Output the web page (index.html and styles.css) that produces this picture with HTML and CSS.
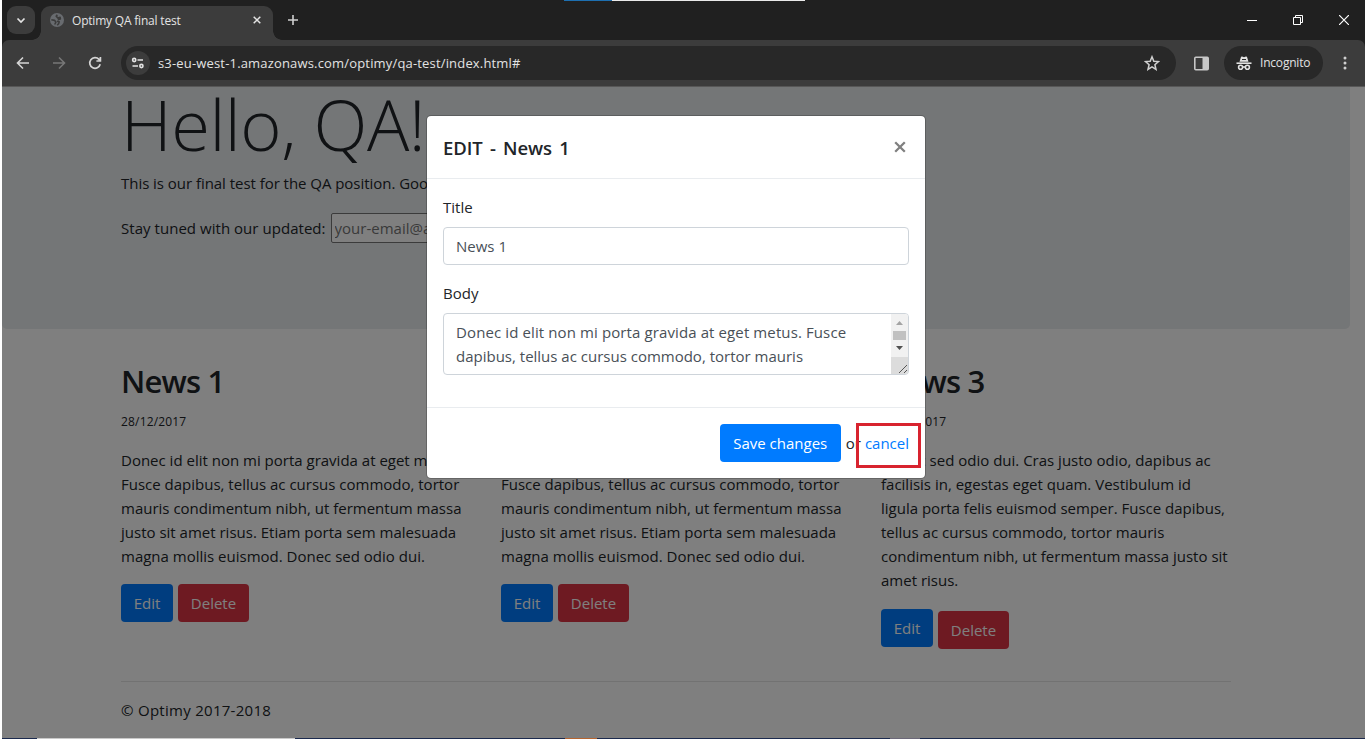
FILE: index.html
```html
<!DOCTYPE html>
<html lang="en">
<head>
<meta charset="utf-8">
<title>Optimy QA final test</title>
<link rel="stylesheet" href="styles.css">
</head>
<body>
<div class="window">
  <header class="tabstrip">
    <span class="topline"></span>
    <button class="tab-search"><svg width="10" height="7" viewBox="0 0 10 7"><path d="M1.500 1.500 5 5l3.500-3.500" fill="none" stroke="#e3e3e3" stroke-width="1.700"/></svg></button>
    <div class="tab">
      <svg class="globe" width="14" height="14" viewBox="0 0 14 14"><circle cx="7" cy="7" r="7" fill="#686b6f"/><path d="M7.300 1.800 6.200 3.300l1.600 1.600 2.300-.6.300 1.700-2.600.6M1.300 6.700l3.400.7 1.200 1.800-1.200 2.300M7 8.300l2.200.4-.6 2-1.400 1.500" fill="none" stroke="#3c3c3c" stroke-width="1.600" stroke-linejoin="round"/></svg>
      <span class="tab-title">Optimy QA final test</span>
      <svg class="tab-close" width="8" height="8" viewBox="0 0 8 8"><path d="m.7.700 6.600 6.600m0-6.600L.7 7.300" stroke="#e3e3e3" stroke-width="1.500"/></svg>
    </div>
    <svg class="new-tab" width="10" height="10" viewBox="0 0 10 10"><path d="M5 0v10M0 5h10" stroke="#d0d0d0" stroke-width="1.600"/></svg>
    <div class="win-controls">
      <svg width="10" height="10" viewBox="0 0 10 10"><path d="M0 5.500h10" stroke="#fff"/></svg>
      <svg width="10" height="10" viewBox="0 0 10 10"><path d="M.5 2.500h7v7h-7zM2.500 2.500v-2h7v7h-2" fill="none" stroke="#fff"/></svg>
      <svg width="10" height="10" viewBox="0 0 10 10"><path d="m0 0 10 10M10 0 0 10" stroke="#fff" stroke-width="1.200"/></svg>
    </div>
  </header>
  <div class="toolbar">
    <svg class="nav-icon" width="14" height="14" viewBox="0 0 14 14"><path d="M13 7H1.500M7 1.500 1.500 7 7 12.500" fill="none" stroke="#d5d5d5" stroke-width="1.600"/></svg>
    <svg class="nav-icon" width="14" height="14" viewBox="0 0 14 14"><path d="M1 7h11.500M7 1.500 12.500 7 7 12.500" fill="none" stroke="#777" stroke-width="1.600"/></svg>
    <svg class="nav-icon" width="14" height="14" viewBox="0 0 14 14"><path d="M12.200 8.300A5.300 5.300 0 1 1 11 3.400L12.200 4.600M12.400 1V5H8.400" fill="none" stroke="#d5d5d5" stroke-width="1.700"/></svg>
    <div class="address">
      <span class="site-info"><svg width="14" height="12" viewBox="0 0 14 12"><g fill="none" stroke="#e3e3e3" stroke-width="1.600"><circle cx="3.200" cy="3" r="1.600"/><path d="M6.500 3H12M1.500 9H7"/><circle cx="10.400" cy="9" r="1.600"/></g></svg></span>
      <span class="url">s3-eu-west-1.amazonaws.com/optimy/qa-test/index.html#</span>
      <svg class="star" width="16" height="16" viewBox="0 0 16 16"><path d="m8 1.800 1.800 4.400 4.700.4-3.600 3.100 1.100 4.600L8 11.800l-4 2.500 1.100-4.600-3.600-3.100 4.700-.4z" fill="none" stroke="#d0d0d0" stroke-width="1.500"/></svg>
    </div>
    <svg class="panel" width="15" height="15" viewBox="0 0 15 15"><rect x=".8" y="1.300" width="13.400" height="12.400" rx="1" fill="none" stroke="#c7c7c7" stroke-width="1.600"/><path d="M8.500 1h5.500v13H8.500z" fill="#c7c7c7"/></svg>
    <div class="incognito">
      <svg width="16" height="15" viewBox="0 0 16 15"><path d="m3.500 5.700 1.400-4.500C5 .6 5.600.4 6.100.6L8 1.200 9.900.6c.5-.2 1.100 0 1.200.6l1.400 4.500z" fill="#e3e3e3"/><path d="M6 3.500h4" stroke="#282828"/><path d="M.5 7.200h15" stroke="#e3e3e3" stroke-width="1.600"/><g fill="none" stroke="#e3e3e3" stroke-width="1.600"><circle cx="4.600" cy="11.300" r="2"/><circle cx="11.400" cy="11.300" r="2"/><path d="M6.500 11h3"/></g></svg>
      <span>Incognito</span>
    </div>
    <svg class="menu" width="4" height="14" viewBox="0 0 4 14"><g fill="#d0d0d0"><circle cx="2" cy="2" r="1.500"/><circle cx="2" cy="7" r="1.500"/><circle cx="2" cy="12" r="1.500"/></g></svg>
  </div>

  <main class="viewport">
    <section class="jumbotron">
      <h1>Hello, QA!</h1>
      <p class="lead">This is our final test for the QA position. Good luck!</p>
      <div class="subscribe"><span class="sub-label">Stay tuned with our updated:</span><input class="email" placeholder="your-email@address.com"></div>
    </section>
    <section class="news">
      <article>
        <h2>News 1</h2>
        <small>28/12/2017</small>
        <p>Donec id elit non mi porta gravida at eget metus.<br>Fusce dapibus, tellus ac cursus commodo, tortor<br>mauris condimentum nibh, ut fermentum massa<br>justo sit amet risus. Etiam porta sem malesuada<br>magna mollis euismod. Donec sed odio dui.</p>
        <div class="actions"><button class="btn edit">Edit</button><button class="btn delete">Delete</button></div>
      </article>
      <article>
        <h2>News 2</h2>
        <small>28/12/2017</small>
        <p>Donec id elit non mi porta gravida at eget metus.<br>Fusce dapibus, tellus ac cursus commodo, tortor<br>mauris condimentum nibh, ut fermentum massa<br>justo sit amet risus. Etiam porta sem malesuada<br>magna mollis euismod. Donec sed odio dui.</p>
        <div class="actions"><button class="btn edit">Edit</button><button class="btn delete">Delete</button></div>
      </article>
      <article>
        <h2>News 3</h2>
        <small>28/12/2017</small>
        <p>Donec sed odio dui. Cras justo odio, dapibus ac<br>facilisis in, egestas eget quam. Vestibulum id<br>ligula porta felis euismod semper. Fusce dapibus,<br>tellus ac cursus commodo, tortor mauris<br>condimentum nibh, ut fermentum massa justo sit<br>amet risus.</p>
        <div class="actions staggered"><button class="btn edit">Edit</button><button class="btn delete">Delete</button></div>
      </article>
    </section>
    <footer class="page-footer">© Optimy 2017-2018</footer>

    <div class="backdrop">
      <div class="modal">
        <div class="modal-header"><h5>EDIT - News 1</h5><svg width="12" height="12" viewBox="0 0 12 12"><path d="m1.200 1.200 9.600 9.600m0-9.600-9.600 9.600" stroke="#808080" stroke-width="2.300"/></svg></div>
        <div class="modal-body">
          <label>Title</label>
          <div class="control">News 1</div>
          <label>Body</label>
          <div class="control area">
            <div class="area-text"><span class="first-line">Donec id elit non mi porta gravida at eget metus. Fusce</span><br>dapibus, tellus ac cursus commodo, tortor mauris</div>
            <div class="scroll">
              <svg width="17" height="60" viewBox="0 0 17 60"><path d="M0 0h17v44H0z" fill="#f1f1f1"/><path d="M0 43h17v17H0z" fill="#dcdcdc"/><path d="m5 11 3.500-4 3.500 4z" fill="#a3a3a3"/><path d="M2 17h13v9H2z" fill="#c1c1c1"/><path d="m5 32 3.500 4 3.500-4z" fill="#505050"/><path d="m8 59 8-8m-3 8 3-3" stroke="#555" fill="none"/></svg>
            </div>
          </div>
        </div>
        <div class="modal-footer"><button class="btn save">Save changes</button><span class="or">or</span><a class="cancel">cancel</a><span class="marker"></span></div>
      </div>
    </div>
  </main>
  <div class="taskbar"><i class="light"></i><i class="orange"></i><i class="grey"></i></div>
</div>
</body>
</html>
```

FILE: styles.css
```css
* { box-sizing: border-box; }
body { margin: 0; background: #fff; color: #212529; font: 15px/24px "Open Sans", "Noto Sans", sans-serif; overflow: hidden; }
svg { display: block; flex: none; }
h1, h2, h5, p { margin: 0; }
button { font: inherit; border: 0; padding: 0; }
.window { width: 1363px; height: 739px; margin-left: 2px; display: flex; flex-direction: column; background: #202020; white-space: nowrap; }

.tabstrip { height: 40px; display: flex; align-items: center; padding: 0 16px 0 5px; position: relative; flex: none; }
.topline { position: absolute; top: 0; left: 562px; width: 241px; height: 1px; background: linear-gradient(90deg, #1d6fb0 48px, #eaeaea 48px); }
.tab-search { width: 28px; height: 28px; border-radius: 9px; background: #3c3c3c; display: grid; place-items: center; }
.tab { position: relative; width: 232px; height: 34px; align-self: flex-end; margin-left: 6px; border-radius: 9px 9px 0 0; background: #3c3c3c; display: flex; align-items: center; padding: 0 12px 6px 9px; color: #e3e3e3; font-size: 12px; }
.tab::before, .tab::after { content: ""; position: absolute; bottom: 0; width: 9px; height: 9px; }
.tab::before { left: -9px; background: radial-gradient(circle at 0 0, transparent 8.500px, #3c3c3c 9px); }
.tab::after { right: -9px; background: radial-gradient(circle at 100% 0, transparent 8.500px, #3c3c3c 9px); }
.tab-title { margin: 2px 0 0 8px; letter-spacing: -.2px; }
.tab-close { margin-left: auto; }
.new-tab { margin-left: 15px; }
.win-controls { margin-left: auto; display: flex; gap: 36px; }

.toolbar { height: 47px; flex: none; display: flex; align-items: center; background: #3c3c3c; border-bottom: 1px solid #575757; border-radius: 7px 7px 0 0; padding: 0 18px 0 14px; }
.nav-icon { margin-right: 22px; }
.address { width: 1055px; height: 34px; margin-left: -3px; border-radius: 17px; background: #282828; display: flex; align-items: center; padding: 0 16px 0 5px; }
.site-info { width: 24px; height: 24px; border-radius: 50%; background: #3c3c3c; display: grid; place-items: center; }
.url { margin-left: 8px; color: #e3e3e3; font-size: 13px; letter-spacing: .17px; }
.star { margin-left: auto; }
.panel { margin-left: 18px; }
.incognito { width: 99px; height: 34px; margin-left: 15px; border-radius: 17px; background: #282828; color: #e3e3e3; display: flex; align-items: center; gap: 8px; padding-left: 12px; font-size: 12px; letter-spacing: -.2px; }
.menu { margin-left: auto; }

.viewport { position: relative; height: 651px; flex: none; background: #fff; overflow: hidden; }
.jumbotron { width: 1348px; height: 242px; padding: 0 119px; background: #e9ecef; border-radius: 0 0 5px 5px; }
h1 { font-size: 70.500px; line-height: 75px; font-weight: 300; letter-spacing: -.5px; }
.lead { margin-top: 9px; letter-spacing: -.04px; }
.subscribe { display: flex; align-items: center; margin-top: 18px; }
.sub-label { letter-spacing: .04px; }
.email { width: 240px; height: 30px; margin-left: 5px; padding: 1px 3px; border: 1px solid #767676; border-radius: 2px; font: inherit; background: #fff; }
.email::placeholder { color: #757575; }
.news { display: grid; grid-template-columns: repeat(3, 350px); gap: 30px; margin-left: 119px; padding-top: 33px; }
h2 { font-size: 31px; line-height: 38px; font-weight: 600; letter-spacing: -.8px; }
small { display: block; font-size: 12px; line-height: 24px; margin-top: 10px; letter-spacing: .17px; }
.news p { margin-top: 14px; }
.actions { display: flex; gap: 5px; margin-top: 16px; }
.btn { height: 38px; border-radius: 4px; color: #fff; }
.edit { width: 52px; background: #007bff; }
.delete { width: 71px; background: #dc3545; }
.staggered .edit { margin-top: 1px; }
.staggered .delete { margin-top: 3px; }
.page-footer { width: 1110px; margin: 32px 0 0 119px; padding-top: 16px; border-top: 1px solid #e5e5e5; letter-spacing: .28px; }

.backdrop { position: absolute; inset: 0; padding: 28px 0 0 424px; background: rgba(0, 0, 0, .5); }
.modal { width: 500px; height: 364px; background: #fff; background-clip: padding-box; border: 1px solid rgba(0, 0, 0, .2); border-radius: 5px; display: flex; flex-direction: column; }
.modal-header { height: 63px; border-bottom: 1px solid #e9ecef; display: flex; justify-content: space-between; align-items: center; padding: 0 19px 0 16px; }
h5 { font-size: 18.500px; font-weight: 600; line-height: 30px; margin-top: 1px; letter-spacing: -.1px; word-spacing: 2.600px; }
.modal-body { height: 228px; padding: 16px; }
label { display: block; margin-bottom: 8px; }
.control { height: 38px; border: 1px solid #ced4da; border-radius: 4px; padding: 6px 12px; color: #495057; }
.control + label { margin-top: 16px; }
.control.area { height: 62px; padding: 0; display: flex; justify-content: space-between; overflow: hidden; }
.area-text { padding: 6px 12px; }
.first-line { letter-spacing: .11px; }
.modal-footer { position: relative; flex: 1; border-top: 1px solid #e9ecef; display: flex; align-items: center; justify-content: flex-end; padding: 0 16px; }
.save { width: 121px; background: #007bff; }
.or { margin-left: 5px; }
.cancel { margin-left: 4px; color: #007bff; }
.marker { position: absolute; left: 429px; top: 15px; width: 65px; height: 45px; border: 3px solid #d8232f; }

.taskbar { height: 1px; flex: none; background: #1b2a4e; position: relative; }
.taskbar i { position: absolute; top: 0; height: 1px; }
.light { left: 35px; width: 258px; background: #c9c9c9; }
.orange { left: 563px; width: 32px; background: #b56530; }
.grey { left: 888px; width: 30px; background: #6b6878; }
```
